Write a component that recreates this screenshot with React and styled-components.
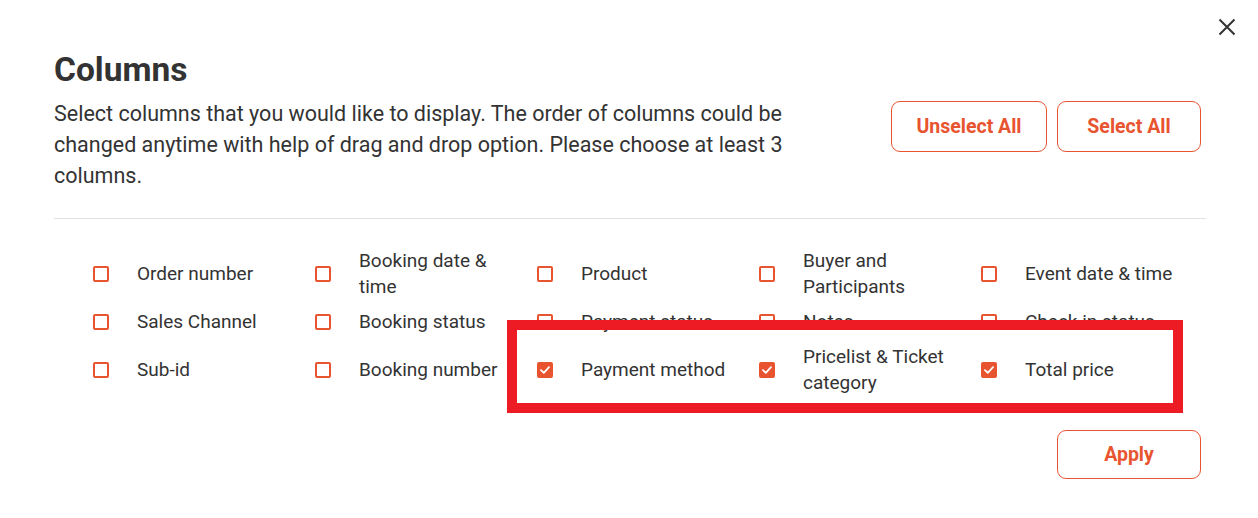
import React, { useState } from 'react';
import styled, { createGlobalStyle } from 'styled-components';

const GlobalStyle = createGlobalStyle`
  html, body {
    margin: 0;
    padding: 0;
    background: #ffffff;
  }
  body {
    font-family: Roboto, "Liberation Sans", Arial, sans-serif;
    color: #333333;
  }
`;

const ORANGE = '#e8542f';

const Dialog = styled.div`
  position: relative;
  box-sizing: border-box;
  width: 1258px;
  height: 518px;
  padding: 50px 52px 39px 54px;
  background: #ffffff;
`;

const CloseButton = styled.button`
  position: absolute;
  top: 18px;
  right: 22px;
  width: 18px;
  height: 18px;
  padding: 0;
  border: none;
  background: none;
  cursor: pointer;
  color: #333333;
  display: flex;
`;

const Header = styled.div`
  display: flex;
  justify-content: space-between;
  align-items: flex-start;
  padding-right: 5px;
  padding-bottom: 27px;
  border-bottom: 1px solid #e2e2e2;
`;

const Intro = styled.div`
  max-width: 760px;
`;

const Title = styled.h2`
  margin: 0;
  font-size: 33.5px;
  line-height: 40px;
  font-weight: 700;
  color: #333333;
`;

const Description = styled.p`
  margin: 8px 0 0 0;
  font-size: 21.5px;
  line-height: 31px;
  color: #333333;
`;

const Actions = styled.div`
  display: flex;
  gap: 10px;
  margin-top: 51px;
`;

const OutlineButton = styled.button`
  box-sizing: border-box;
  width: ${props => props.$width}px;
  height: ${props => props.$height}px;
  border: 1px solid ${ORANGE};
  border-radius: 9px;
  background: #ffffff;
  color: ${ORANGE};
  font-family: Roboto, "Liberation Sans", Arial, sans-serif;
  font-size: 19.5px;
  font-weight: 700;
  cursor: pointer;
`;

const Grid = styled.div`
  display: grid;
  grid-template-columns: repeat(5, 222px);
  row-gap: 9px;
  align-items: center;
  padding: 29px 0 0 39px;
`;

const Option = styled.label`
  display: flex;
  align-items: center;
  gap: 28px;
  cursor: pointer;
`;

const Box = styled.span`
  box-sizing: border-box;
  flex: 0 0 16px;
  width: 16px;
  height: 16px;
  border: 2px solid ${ORANGE};
  border-radius: 2px;
  background: ${props => (props.$checked ? ORANGE : '#ffffff')};
  display: flex;
  align-items: center;
  justify-content: center;
`;

const Label = styled.span`
  max-width: 158px;
  font-size: 19px;
  line-height: 26px;
  color: #333333;
`;

const Footer = styled.div`
  display: flex;
  justify-content: flex-end;
  padding: 34px 5px 0 0;
`;

const Highlight = styled.div`
  position: absolute;
  left: 507px;
  top: 320px;
  width: 676px;
  height: 93px;
  box-sizing: border-box;
  border: 10px solid #ed1c24;
  pointer-events: none;
`;

const columns = [
  'Order number',
  'Booking date & time',
  'Product',
  'Buyer and Participants',
  'Event date & time',
  'Sales Channel',
  'Booking status',
  'Payment status',
  'Notes',
  'Check in status',
  'Sub-id',
  'Booking number',
  'Payment method',
  'Pricelist & Ticket category',
  'Total price',
];

const initial = ['Payment method', 'Pricelist & Ticket category', 'Total price'];

const Checkbox = ({ checked }) => (
  <Box $checked={checked}>
    {checked && (
      <svg width="10" height="8" viewBox="0 0 10 8" fill="none">
        <path d="M1 4.2 L3.8 6.8 L9 1.2" stroke="#ffffff" strokeWidth="1.8" strokeLinecap="round" strokeLinejoin="round" />
      </svg>
    )}
  </Box>
);

export default function App() {
  const [selected, setSelected] = useState(initial);

  const toggle = (name) => {
    setSelected(prev =>
      prev.includes(name) ? prev.filter(c => c !== name) : [...prev, name]
    );
  };

  return (
    <>
      <GlobalStyle />
      <Dialog>
        <CloseButton aria-label="Close">
          <svg width="18" height="18" viewBox="0 0 18 18">
            <path d="M1.5 1.5 L16.5 16.5 M16.5 1.5 L1.5 16.5" stroke="#333333" strokeWidth="2" />
          </svg>
        </CloseButton>

        <Header>
          <Intro>
            <Title>Columns</Title>
            <Description>
              Select columns that you would like to display. The order of columns could be
              changed anytime with help of drag and drop option. Please choose at least 3 columns.
            </Description>
          </Intro>
          <Actions>
            <OutlineButton $width={156} $height={51} onClick={() => setSelected([])}>
              Unselect All
            </OutlineButton>
            <OutlineButton $width={144} $height={51} onClick={() => setSelected(columns)}>
              Select All
            </OutlineButton>
          </Actions>
        </Header>

        <Grid>
          {columns.map(name => (
            <Option key={name} onClick={() => toggle(name)}>
              <Checkbox checked={selected.includes(name)} />
              <Label>{name}</Label>
            </Option>
          ))}
        </Grid>

        <Footer>
          <OutlineButton $width={144} $height={49}>Apply</OutlineButton>
        </Footer>

        <Highlight />
      </Dialog>
    </>
  );
}
